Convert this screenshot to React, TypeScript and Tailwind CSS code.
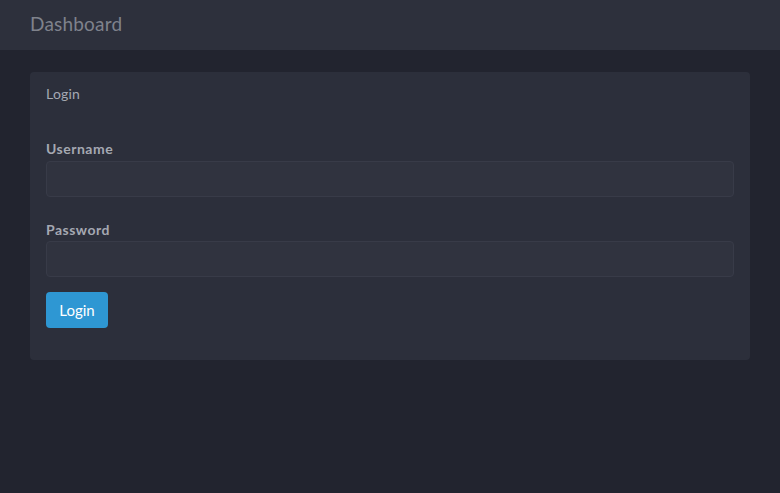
export default function App() {
  return (
    <div className="min-h-[493px] w-full bg-[#22242f] font-['Lato','Noto_Sans',sans-serif]">
      <nav className="flex h-[50px] items-center bg-[#2d303c] px-[30px] pb-0.5">
        <span className="text-[19px] tracking-[0.2px] text-[#7f828c]">Dashboard</span>
      </nav>

      <div className="px-[30px] pt-[22px]">
        <div className="rounded-[4px] bg-[#2c2f3b] px-4 pb-8 pt-3">
          <div className="text-[14px] leading-5 tracking-[0.2px] text-[#a5a8b2]">Login</div>

          <div className="mt-[35px]">
            <label className="block text-[14px] font-bold leading-5 tracking-[0.5px] text-[#a5a8b2]">Username</label>
            <input
              type="text"
              className="mt-0.5 block h-9 w-full rounded-[4px] border border-[#383b48] bg-[#30333f] px-3 text-sm text-gray-200 outline-none"
            />
          </div>

          <div className="mt-[23px]">
            <label className="block text-[14px] font-bold leading-5 tracking-[0.5px] text-[#a5a8b2]">Password</label>
            <input
              type="password"
              className="mt-px block h-9 w-full rounded-[4px] border border-[#383b48] bg-[#30333f] px-3 text-sm text-gray-200 outline-none"
            />
          </div>

          <button className="mt-[15px] h-9 w-[62px] rounded-[4px] bg-[#2e97d3] text-[15px] text-white">
            Login
          </button>
        </div>
      </div>
    </div>
  );
}
